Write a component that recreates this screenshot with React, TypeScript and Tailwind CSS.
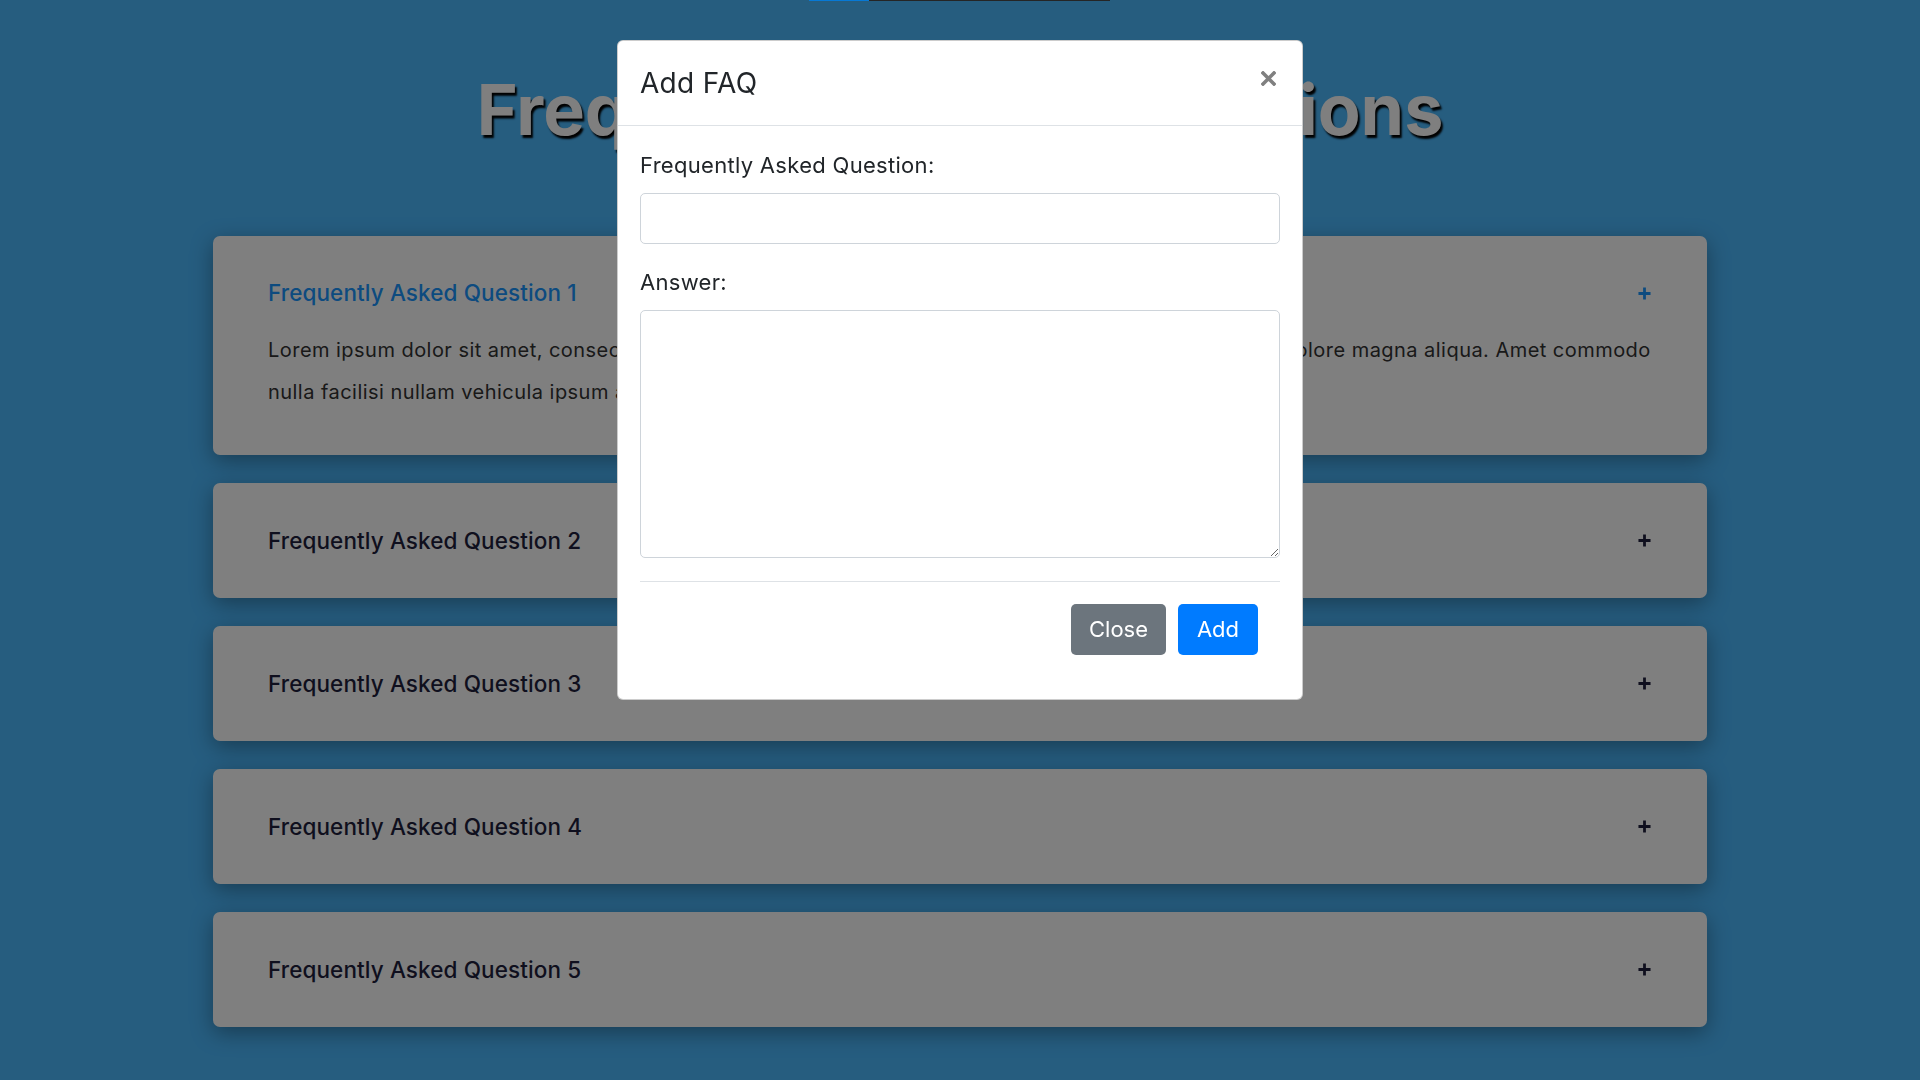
import { useState } from 'react';

const FONT = "font-['Inter','Noto_Sans',sans-serif]";

const faqs = [
  {
    id: 1,
    question: 'Frequently Asked Question 1',
    answer: [
      'Lorem ipsum dolor sit amet, consectetur adipiscing elit, sed do eiusmod tempor incididunt ut labore et dolore magna aliqua. Amet commodo',
      'nulla facilisi nullam vehicula ipsum a arcu cursus vitae.',
    ],
  },
  { id: 2, question: 'Frequently Asked Question 2', answer: [] },
  { id: 3, question: 'Frequently Asked Question 3', answer: [] },
  { id: 4, question: 'Frequently Asked Question 4', answer: [] },
  { id: 5, question: 'Frequently Asked Question 5', answer: [] },
];

function PlusIcon({ className }: { className?: string }) {
  return (
    <svg viewBox="0 0 14 14" className={className} fill="none" stroke="currentColor" strokeWidth="3">
      <path d="M7 0.5v13M0.5 7h13" />
    </svg>
  );
}

function FaqCard({ faq, open }: { faq: (typeof faqs)[number]; open: boolean }) {
  if (open) {
    return (
      <div className="rounded-[7px] bg-white px-[55px] pt-[42px] pb-[42px] shadow-[0_6px_22px_rgba(0,0,0,0.35)]">
        <div className="flex items-center justify-between h-[30px]">
          <h3 className="text-[22.5px] tracking-[0.1px] font-medium text-[#1a96ff]">{faq.question}</h3>
          <PlusIcon className="w-[13px] h-[13px] text-[#1a96ff] mr-[1px]" />
        </div>
        <p className="mt-[21px] text-[20px] tracking-[0.46px] leading-[42px] text-[#333]">
          {faq.answer.map((line) => (
            <span key={line} className="block whitespace-nowrap">
              {line}
            </span>
          ))}
        </p>
      </div>
    );
  }
  return (
    <div className="h-[115px] rounded-[7px] bg-white px-[55px] flex items-center justify-between shadow-[0_6px_22px_rgba(0,0,0,0.35)]">
      <h3 className="text-[22.5px] tracking-[0.1px] font-medium text-[#1e1e3c]">{faq.question}</h3>
      <PlusIcon className="w-[13px] h-[13px] text-[#1e1e3c] mr-[1px]" />
    </div>
  );
}

export default function App() {
  const [question, setQuestion] = useState('');
  const [answer, setAnswer] = useState('');

  return (
    <div className={`${FONT} relative min-h-screen bg-[#4cbaff] overflow-hidden`}>
      {/* page behind the modal */}
      <div className="pt-[66px] pb-[53px]">
        <h1 className="text-center text-[70px] leading-[88px] font-bold text-white [text-shadow:2px_3px_2px_#000]">
          Frequently Asked Questions
        </h1>
        <div className="mx-auto mt-[82px] w-[1494px] flex flex-col gap-[28px]">
          {faqs.map((faq) => (
            <FaqCard key={faq.id} faq={faq} open={faq.id === 1} />
          ))}
        </div>
      </div>

      {/* backdrop */}
      <div className="fixed inset-0 bg-black/50" />

      {/* strip at the top edge */}
      <div className="fixed top-0 left-[809px] flex h-[1px]">
        <div className="w-[60px] bg-[#0779d5]" />
        <div className="w-[241px] bg-[#252525]" />
      </div>

      {/* modal */}
      <div className="fixed inset-0 flex justify-center pt-[40px]">
        <div className="w-[686px] h-[660px] rounded-[6px] bg-white border border-black/20 flex flex-col">
          <div className="h-[85px] shrink-0 flex items-start justify-between border-b border-[#dee2e6] px-[22px]">
            <h5 className="mt-[24px] text-[28px] tracking-[0.3px] leading-[36px] text-[#212529]">Add FAQ</h5>
            <button className="mt-[30px] mr-[4px] text-[#808080]" aria-label="Close">
              <svg viewBox="0 0 15 15" className="w-[15px] h-[15px]" stroke="currentColor" strokeWidth="3.6" strokeLinecap="square">
                <path d="M2 2l11 11M13 2L2 13" />
              </svg>
            </button>
          </div>
          <div className="px-[22px] pt-[24px]">
            <label className="block text-[22px] tracking-[0.3px] leading-[30px] text-[#212529]">Frequently Asked Question:</label>
            <input
              value={question}
              onChange={(e) => setQuestion(e.target.value)}
              className="mt-[13px] block w-full h-[51px] rounded-[5px] border border-[#ced4da] px-3 text-[20px] outline-none"
            />
            <label className="mt-[23px] block text-[22px] tracking-[0.3px] leading-[30px] text-[#212529]">Answer:</label>
            <textarea
              value={answer}
              onChange={(e) => setAnswer(e.target.value)}
              className="mt-[13px] block w-full h-[248px] rounded-[5px] border border-[#ced4da] px-3 py-2 text-[20px] outline-none"
            />
            <div className="mt-[23px] border-t border-[#dee2e6]" />
            <div className="mt-[22px] flex justify-end gap-[12px] pr-[22px]">
              <button className="h-[51px] w-[95px] rounded-[5px] bg-[#6c757d] text-[22px] text-white">Close</button>
              <button className="h-[51px] w-[80px] rounded-[5px] bg-[#007bff] text-[22px] text-white">Add</button>
            </div>
          </div>
        </div>
      </div>
    </div>
  );
}
